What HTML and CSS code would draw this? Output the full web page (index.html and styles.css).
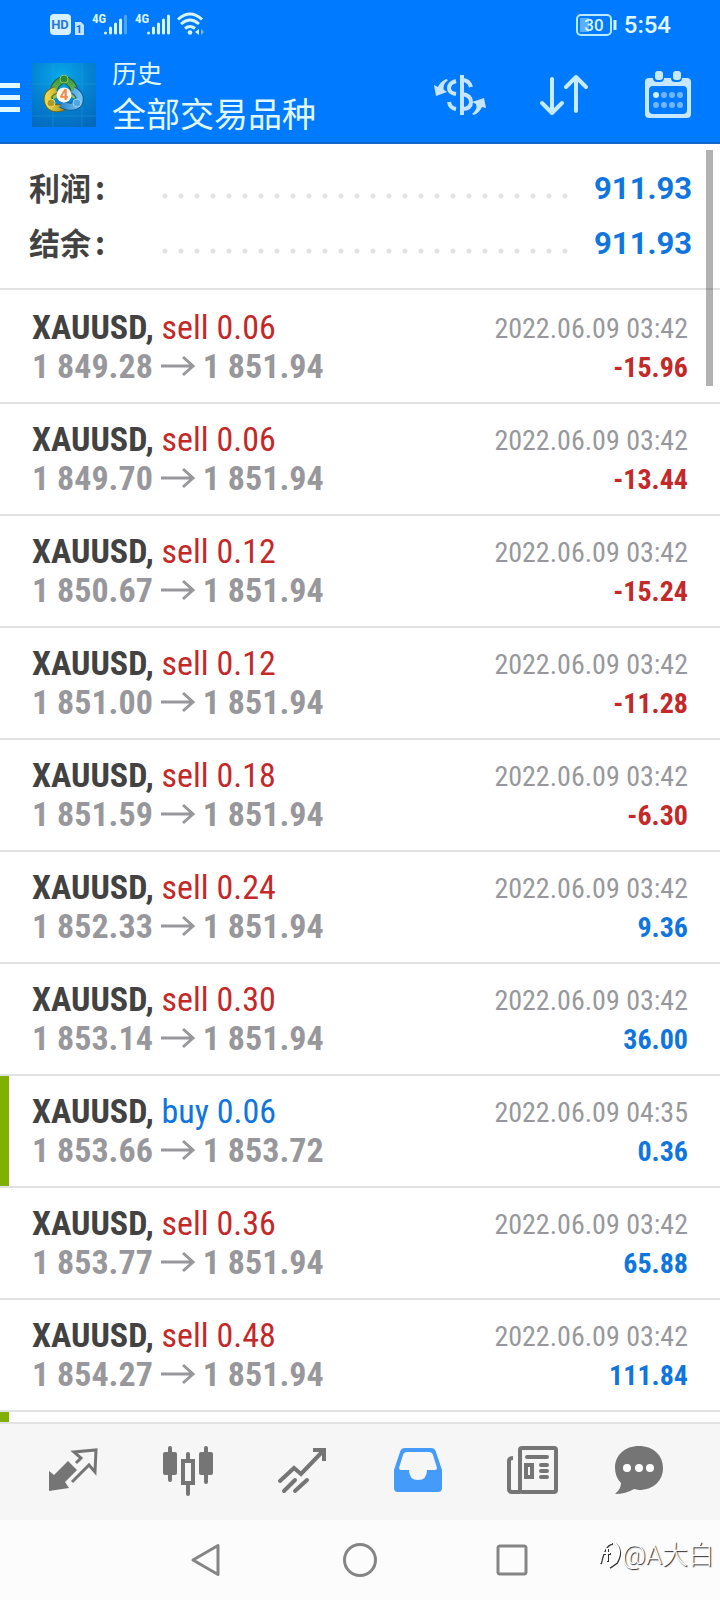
FILE: index.html
```html
<!DOCTYPE html>
<html lang="zh-CN">
<head>
<meta charset="utf-8">
<meta name="viewport" content="width=device-width, initial-scale=1">
<title>历史</title>
<link rel="stylesheet" href="styles.css">
</head>
<body>
<div class="app">
  <header class="header">
    <div class="status">
      <div class="status-left">
        <svg width="160" height="28" viewBox="0 0 160 28" aria-hidden="true">
          <rect x="1" y="3" width="21" height="21" rx="4" fill="#d6f0ff"/>
          <text x="11" y="18" text-anchor="middle" class="hd-text">HD</text>
          <path d="M26 11h6l3 3v10h-9z" fill="#c3e5ff"/>
          <text x="30" y="22" text-anchor="middle" class="sim-text">1</text>
          <text x="43" y="12" class="net-text">4G</text>
          <g stroke="#d6f5ff" stroke-width="3" stroke-linecap="round">
            <path d="M56.500 22v0M61.500 17v5M66.500 13v9M71.500 9v13"/>
            <path d="M76.500 5v17" opacity=".35"/>
          </g>
          <text x="86" y="12" class="net-text">4G</text>
          <path d="M99.500 22v0M104.500 17v5M109.500 13v9M114.500 9v13M119.500 5v17" stroke="#d6f5ff" stroke-width="3" stroke-linecap="round"/>
          <g fill="none" stroke="#d6f5ff" stroke-width="3">
            <path d="M129 8.500q12-11 24 0M132 13q9-8 18 0M136 17.500q5-4 10 0"/>
          </g>
          <circle cx="141" cy="21.500" r="2.300" fill="#d6f5ff"/>
          <path d="M150 18v6l-4-3z" fill="#d6f5ff"/>
          <path d="M152 18v6l3-3z" fill="#75b8ff"/>
        </svg>
      </div>
      <div class="status-right">
        <svg width="42" height="22" viewBox="0 0 42 22" aria-hidden="true">
          <rect x="1" y="1" width="34" height="20" rx="4" fill="none" stroke="#b7e9ff" stroke-width="2"/>
          <path d="M4 4h9v14H4z" fill="#5caeff"/>
          <path d="M39 6v10" stroke="#d6f5ff" stroke-width="3"/>
          <text x="18" y="17" text-anchor="middle" class="bat-text">30</text>
        </svg>
        <time>5:54</time>
      </div>
    </div>
    <div class="toolbar">
      <button class="menu" aria-label="菜单"><span></span><span></span><span></span></button>
      <svg class="logo" width="64" height="64" viewBox="0 0 64 64" aria-hidden="true">
        <defs>
          <radialGradient id="lb" cx=".45" cy=".2" r=".9"><stop offset="0" stop-color="#08a8ea"/><stop offset=".55" stop-color="#0480d0"/><stop offset="1" stop-color="#0468bc"/></radialGradient>
          <linearGradient id="lg" x2="0" y2="1"><stop offset="0" stop-color="#3f9c3c"/><stop offset="1" stop-color="#8cc860"/></linearGradient>
          <linearGradient id="ly" x2="1"><stop offset="0" stop-color="#e8d64c"/><stop offset="1" stop-color="#a79422"/></linearGradient>
          <linearGradient id="lu" x2="1"><stop offset="0" stop-color="#2f86cc"/><stop offset="1" stop-color="#72c0ee"/></linearGradient>
        </defs>
        <path fill="url(#lb)" d="M0 0h64v64H0z"/>
        <path d="M21 0v64M50 0v64M0 21h64M0 53h64" stroke="#2aa0e0" opacity=".4"/>
        <g fill="none" stroke-width="6">
          <path d="M24 35q-4-8 0-13 8-10 16 0 4 5 1 13" stroke="#1d5f3c" stroke-width="8"/>
          <path d="M24 35q-4-8 0-13 8-10 16 0 4 5 1 13" stroke="url(#lg)"/>
          <path d="M24 27q-10 3-8 12 3 9 16 5" stroke="#70681a" stroke-width="8"/>
          <path d="M24 27q-10 3-8 12 3 9 16 5" stroke="url(#ly)"/>
          <path d="M41 27q9 5 6 13-6 7-18 1" stroke="#125a96" stroke-width="8"/>
          <path d="M41 27q9 5 6 13-6 7-18 1" stroke="url(#lu)"/>
        </g>
        <circle cx="32" cy="16" r="4" fill="#2f8635" stroke="#82c86c"/>
        <circle cx="19" cy="40" r="4" fill="#b19a2b" stroke="#e9dc68"/>
        <circle cx="45" cy="40" r="4" fill="#4ea8e2" stroke="#96d2f4"/>
        <circle cx="32" cy="32" r="7.500" fill="#fff8f0"/>
        <text x="32" y="37" text-anchor="middle" class="logo-text">4</text>
      </svg>
      <div class="titles">
        <div class="subtitle">历史</div>
        <h1 class="title">全部交易品种</h1>
      </div>
      <div class="actions">
        <button aria-label="货币">
          <svg width="52" height="48" viewBox="0 0 52 48">
            <g fill="none" stroke="#c8e5ff" stroke-width="4">
              <path d="M28 4v40"/>
              <path d="M37 16q-2-7-9-7M22 10q-7 2-7 7t7 6M28 23q9 1 9 8t-9 7M22 38q-6-1-7-7"/>
            </g>
            <path d="M12 8l2 1q-6 5-4 10l3 2-11 4L0 14l4 2q2-5 8-8zM40 44l-2-1q6-5 4-10l-4-2 12-4 2 10-4-1q-2 5-8 8z" fill="#c8e5ff"/>
          </svg>
        </button>
        <button aria-label="排序">
          <svg width="52" height="48" viewBox="0 0 52 48"><path d="M14 8v34M4 32l10 10 10-10M38 40V6M28 16L38 6l10 10" fill="none" stroke="#c8ecff" stroke-width="4" stroke-linecap="round" stroke-linejoin="round"/></svg>
        </button>
        <button aria-label="日期">
          <svg width="52" height="48" viewBox="0 0 52 48">
            <path fill-rule="evenodd" fill="#c8e8ff" d="M7 7h4q0 4 4 4h3q4 0 4-4h7q0 4 4 4h3q4 0 4-4h5q4 0 4 4v32q0 4-4 4H7q-4 0-4-4V11q0-4 4-4zM11 15q-4 0-4 4v20q0 4 4 4h30q4 0 4-4V19q0-4-4-4z"/>
            <rect x="13" width="8" height="9" rx="3" fill="#c8e8ff"/><rect x="31" width="8" height="9" rx="3" fill="#c8e8ff"/>
            <circle cx="14" cy="24" r="3" fill="#d5efff"/>
            <g fill="#6fb6ff"><circle cx="22" cy="24" r="3"/><circle cx="30" cy="24" r="3"/><circle cx="38" cy="24" r="3"/><circle cx="14" cy="34" r="3"/><circle cx="22" cy="34" r="3"/><circle cx="30" cy="34" r="3"/><circle cx="38" cy="34" r="3"/></g>
          </svg>
        </button>
      </div>
    </div>
  </header>

  <main class="content">
    <dl class="summary">
      <div class="sum-row"><dt>利润<span>:</span></dt><dd>911.93</dd></div>
      <div class="sum-row"><dt>结余<span>:</span></dt><dd>911.93</dd></div>
    </dl>
    <ul class="deals" id="deals"></ul>
    <div class="scrollbar"></div>
  </main>

  <nav class="tabs">
    <button aria-label="行情"><svg width="52" height="52" viewBox="0 0 52 52"><path d="M2 24l5 4 14-14 9 9-12 12 4 6-20 3z" fill="#757575"/><path d="M29 16l5-5-7-6 22-2-1 22-6-7-17 17" fill="none" stroke="#757575" stroke-width="3"/></svg></button>
    <button aria-label="图表"><svg width="52" height="52" viewBox="0 0 52 52"><g fill="#757575"><rect x="1" y="5" width="14" height="23" rx="2"/><rect x="37" y="5" width="14" height="23" rx="2"/></g><g fill="none" stroke="#757575" stroke-width="4" stroke-linecap="round"><path d="M8 1v32M44 1v34M26 7v7M26 36v11"/><rect x="21" y="14" width="10" height="22"/></g></svg></button>
    <button aria-label="交易"><svg width="52" height="52" viewBox="0 0 52 52"><g fill="none" stroke="#757575" stroke-width="4"><path d="M3 34l14-13 7 6L46 4" stroke-linecap="round"/><path d="M36 3h11v11"/><path d="M7 44l11-11M18 44l12-11" stroke-linecap="round"/></g></svg></button>
    <button aria-label="历史" aria-current="page"><svg width="52" height="52" viewBox="0 0 52 52"><path fill-rule="evenodd" fill="#459bfa" d="M13 1h26q4 0 5 4l6 18v18q0 4-4 4H6q-4 0-4-4V23L8 5q1-4 5-4zM15 5q-3 0-4 3L7 21q0 2 2 2h8q0 10 9 10t9-10h8q2 0 2-2L41 8q-1-3-4-3z"/></svg></button>
    <button aria-label="新闻"><svg width="52" height="52" viewBox="0 0 52 52"><g fill="none" stroke="#757575" stroke-width="4" stroke-linecap="round"><rect x="13" y="1" width="36" height="44" rx="2"/><path d="M13 45H5q-3 0-3-3V14q0-3 4-3" stroke-linecap="butt"/><path d="M20 10h20M34 18h6M34 24h6M34 30h6"/><rect x="19" y="18" width="6" height="12"/></g></svg></button>
    <button aria-label="消息"><svg width="52" height="52" viewBox="0 0 52 52"><path fill="#757575" d="M17-1c14 0 24 9 24 22s-10 22-24 22l-5-1q-8 5-19 5 6-5 6-11-6-6-6-15C-7 8 3-1 17-1z"/><g fill="#fff"><circle cx="5" cy="21" r="4"/><circle cx="17" cy="21" r="4"/><circle cx="28" cy="21" r="4"/></g></svg></button>
  </nav>

  <footer class="sysnav">
    <button aria-label="返回"><svg width="36" height="36" viewBox="0 0 36 36"><path d="M29 3.500v29L4 18z"/></svg></button>
    <button aria-label="主页"><svg width="36" height="36" viewBox="0 0 36 36"><circle cx="18" cy="18" r="15.500"/></svg></button>
    <button aria-label="最近任务"><svg width="36" height="36" viewBox="0 0 36 36"><rect x="3" y="4" width="28" height="28" rx="2"/></svg></button>
    <div class="watermark"><svg width="24" height="32" viewBox="0 0 24 32" aria-hidden="true"><path d="M3 25q4-20 12-20M5 15h8M10 10v13M17 4q9 8 2 20l-7 5" fill="none" stroke="#333" stroke-width="2"/><path d="M2 24q4-20 12-20M4 14h8M9 9v13M16 3q9 8 2 20l-7 5" fill="none" stroke="#fff" stroke-width="2"/></svg><span>@A大白</span></div>
  </footer>
</div>
<script src="deals.js"></script>
</body>
</html>
```

FILE: styles.css
```css
* { box-sizing: border-box; }
body { margin: 0; background: #fff; font-family: Roboto, "Noto Sans CJK SC", sans-serif; }
button { border: 0; padding: 0; background: none; display: flex; align-items: center; justify-content: center; }
svg { display: block; overflow: visible; }

.app { height: 100vh; display: flex; flex-direction: column; overflow: hidden; }

.header { background: #007aff; color: #e2f8ff; border-bottom: 2px solid #1069c9; flex: none; }
.status { height: 48px; padding: 2px 49px 0; display: flex; justify-content: space-between; align-items: center; }
.status-right { display: flex; align-items: center; gap: 6px; font-size: 24px; line-height: 28px; font-weight: 500; }
.hd-text { font: bold 13px Roboto, sans-serif; fill: #2878d8; }
.sim-text { font: bold 11px Roboto, sans-serif; fill: #1670dd; }
.net-text { font: bold 13px "Roboto Condensed", Roboto, sans-serif; fill: #d6f5ff; }
.bat-text { font: 500 17px Roboto, sans-serif; fill: #d6f5ff; }
.logo-text { font: bold 15px Roboto, sans-serif; fill: #f08a48; }

.toolbar { height: 94px; display: flex; align-items: center; }
.menu { flex-direction: column; gap: 7px; width: 20px; margin-right: 12px; padding-top: 4px; }
.menu span { width: 100%; height: 5px; background: #e0faff; }
.logo { flex: none; }
.titles { margin-left: 16px; flex: 1; padding-top: 6px; }
.subtitle { font-size: 25px; line-height: 34px; }
.title { margin: 0; font-size: 34px; line-height: 46px; font-weight: 400; }
.actions { display: flex; gap: 52px; padding-right: 26px; }

.content { flex: 1; min-height: 0; overflow: hidden; position: relative; border-bottom: 2px solid #e2e2e2; }
.summary { margin: 0; padding: 16px 28px 18px 29px; border-bottom: 2px solid #e2e2e2; }
.sum-row { display: flex; align-items: center; height: 55px; font-weight: 700; }
.sum-row dt { display: flex; gap: 4px; width: 128px; font-family: "Noto Sans CJK SC", sans-serif; font-size: 31px; line-height: 44px; padding-bottom: 2px; color: #424242; }
.sum-row dd { flex: 1; margin: 0; padding-top: 2px; display: flex; align-items: center; color: #0f76df; font-size: 31px; }
.sum-row dd::before { content: ""; flex: 1; height: 6px; margin: 14px 18px 0 0; background: radial-gradient(circle, #e2e2e2 2px, transparent 3px) 0 0 / 16px 6px repeat-x; }

.deals { list-style: none; margin: 0; padding: 0; }
.deal { display: grid; grid-template-columns: 1fr auto; align-content: start; height: 112px; padding: 16px 32px 0; border-bottom: 2px solid #e2e2e2; line-height: 39px; font-family: "Roboto Condensed", "Liberation Sans Narrow", Roboto, sans-serif; font-size: 34px; white-space: nowrap; }
.deal:first-child { height: 114px; padding-top: 18px; }
.deal.closed { box-shadow: inset 9px 0 #80b000; }
.symbol { font-weight: 700; color: #424242; }
.sell { color: #c42828; }
.buy { color: #0f76df; }
.prices { display: flex; align-items: center; gap: 8px; color: #98989c; font-weight: 700; }
.date, .profit { text-align: right; font-size: 28px; line-height: 36px; padding-top: 3px; }
.date { color: #98989c; }
.profit { font-weight: 700; }
.scrollbar { position: absolute; top: 6px; right: 7px; width: 7px; height: 236px; background: rgba(0, 0, 0, .3); }

.tabs { flex: none; height: 96px; background: #f6f6f6; display: grid; grid-template-columns: repeat(6, 1fr); padding: 2px 15px 0; }

.sysnav { flex: none; height: 80px; background: #fcfcfc; position: relative; display: flex; justify-content: center; align-items: center; gap: 117px; }
.sysnav button svg { fill: none; stroke: #858585; stroke-width: 3; stroke-linejoin: round; }
.watermark { position: absolute; right: 6px; top: 18px; display: flex; align-items: center; font-size: 26px; line-height: 34px; font-weight: 300; color: #fff; text-shadow: 1px 1px 1px #222; }
```

FILE: deals.js
```js
const deals = [
  ["sell", "0.06", "1 849.28", "1 851.94", "03:42", "-15.96"],
  ["sell", "0.06", "1 849.70", "1 851.94", "03:42", "-13.44"],
  ["sell", "0.12", "1 850.67", "1 851.94", "03:42", "-15.24"],
  ["sell", "0.12", "1 851.00", "1 851.94", "03:42", "-11.28"],
  ["sell", "0.18", "1 851.59", "1 851.94", "03:42", "-6.30"],
  ["sell", "0.24", "1 852.33", "1 851.94", "03:42", "9.36"],
  ["sell", "0.30", "1 853.14", "1 851.94", "03:42", "36.00"],
  ["buy", "0.06", "1 853.66", "1 853.72", "04:35", "0.36", "closed"],
  ["sell", "0.36", "1 853.77", "1 851.94", "03:42", "65.88"],
  ["sell", "0.48", "1 854.27", "1 851.94", "03:42", "111.84"]
];
const arrow = '<svg width="34" height="20" viewBox="0 0 34 20" aria-label="→"><path d="M0 9h32M22 0l10 9-10 9" fill="none" stroke="#98989c" stroke-width="3"/></svg>';
document.getElementById("deals").innerHTML = deals.map(([side, lots, open, close, time, profit, mark]) => `
  <li class="deal ${mark || ""}">
    <div><span class="symbol">XAUUSD,</span> <span class="${side}">${side} ${lots}</span></div>
    <div class="date">2022.06.09 ${time}</div>
    <div class="prices"><span>${open}</span>${arrow}<span>${close}</span></div>
    <div class="profit ${profit.startsWith("-") ? "sell" : "buy"}">${profit}</div>
  </li>`).join("") + '<li class="deal closed"></li>';
```
